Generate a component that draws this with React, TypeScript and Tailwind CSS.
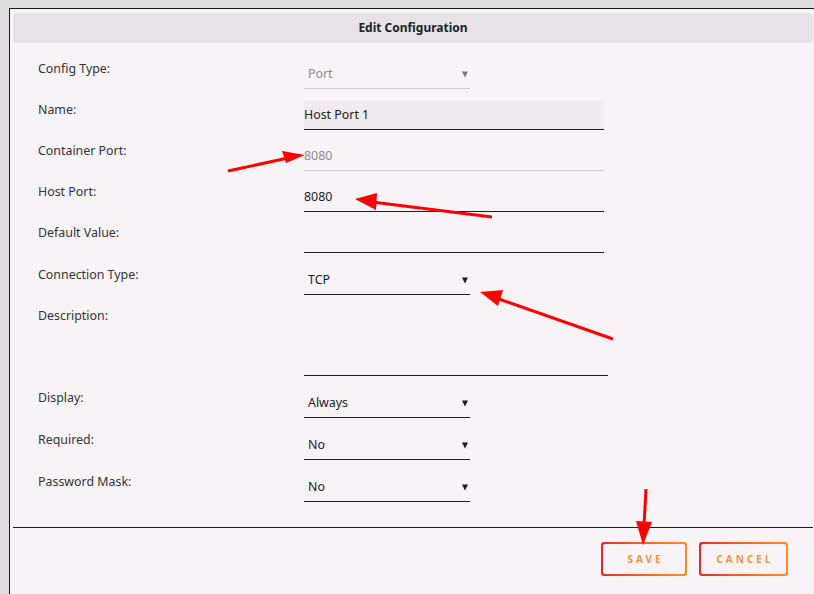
import React from "react";

type Row = {
  label: string;
  kind: "select" | "input" | "filled" | "textarea";
  value?: string;
  disabled?: boolean;
  mt: string;
};

const rows: Row[] = [
  { label: "Config Type:", kind: "select", value: "Port", disabled: true, mt: "mt-[17px]" },
  { label: "Name:", kind: "filled", value: "Host Port 1", mt: "mt-[12px]" },
  { label: "Container Port:", kind: "input", value: "8080", disabled: true, mt: "mt-[12px]" },
  { label: "Host Port:", kind: "input", value: "8080", mt: "mt-[12px]" },
  { label: "Default Value:", kind: "input", value: "", mt: "mt-[12px]" },
  { label: "Connection Type:", kind: "select", value: "TCP", mt: "mt-[13px]" },
  { label: "Description:", kind: "textarea", value: "", mt: "mt-[12px]" },
  { label: "Display:", kind: "select", value: "Always", mt: "mt-[13px]" },
  { label: "Required:", kind: "select", value: "No", mt: "mt-[13px]" },
  { label: "Password Mask:", kind: "select", value: "No", mt: "mt-[13px]" },
];

function Caret({ gray }: { gray?: boolean }) {
  return (
    <svg width="6" height="7" viewBox="0 0 6 7" className="shrink-0">
      <path d="M0 0.5 H6 L3 6.5 Z" fill={gray ? "#7a7a7a" : "#1a1a1a"} />
    </svg>
  );
}

function Field({ row }: { row: Row }) {
  if (row.kind === "select") {
    return (
      <div
        className={`w-[166px] h-[29px] flex items-center justify-between pl-[4px] pr-[2px] border-b ${
          row.disabled ? "border-[#cfcccf] text-[#8c8c8c]" : "border-[#1e1e1e] text-[#222]"
        }`}
      >
        <span>{row.value}</span>
        <Caret gray={row.disabled} />
      </div>
    );
  }
  if (row.kind === "filled") {
    return (
      <div className="w-[300px] h-[29px] flex items-center bg-[#efebef] border-b border-[#1e1e1e] text-[#222]">
        <span>{row.value}</span>
      </div>
    );
  }
  if (row.kind === "textarea") {
    return <div className="w-[304px] h-[69px] border-b border-[#1e1e1e]" />;
  }
  return (
    <div
      className={`w-[300px] h-[29px] flex items-center border-b ${
        row.disabled ? "border-[#cfcccf] text-[#8c8c8c]" : "border-[#1e1e1e] text-[#222]"
      }`}
    >
      <span>{row.value}</span>
    </div>
  );
}

function GradButton({ label, w }: { label: string; w: string }) {
  return (
    <div className={`${w} h-[34px] rounded-[3px] p-[2px] bg-gradient-to-r from-[#e8272b] to-[#fd8c2c]`}>
      <div className="w-full h-full rounded-[2px] bg-[#f7f3f7] flex items-center justify-center">
        <span className="text-[10px] font-bold tracking-[3px] text-[#f5913e] pl-[3px]">{label}</span>
      </div>
    </div>
  );
}

function Arrows() {
  const red = "#ff0000";
  return (
    <svg className="absolute left-0 top-0 pointer-events-none" width="814" height="594" viewBox="0 0 814 594">
      <line x1="228" y1="171" x2="288" y2="158" stroke={red} strokeWidth="3" />
      <polygon points="305,155 282,151 286,163" fill={red} />
      <line x1="492" y1="217" x2="372" y2="202" stroke={red} strokeWidth="3" />
      <polygon points="355,199 377,193 376,210" fill={red} />
      <line x1="613" y1="339" x2="496" y2="298" stroke={red} strokeWidth="3" />
      <polygon points="480,292 503,290 498,306" fill={red} />
      <line x1="646" y1="489" x2="644" y2="526" stroke={red} strokeWidth="3" />
      <polygon points="643,545 636,521 652,522" fill={red} />
    </svg>
  );
}

export default function App() {
  return (
    <div
      className="relative w-[814px] h-[594px] overflow-hidden bg-[#dedede] pl-[9px] pt-[8px] text-[12.4px]"
      style={{ fontFamily: '"Noto Sans", "DejaVu Sans", sans-serif' }}
    >
      <div className="h-full w-[806px] border-l border-t border-[#161616] bg-[#f7f3f7] pt-[4px] pl-[3px] pr-[2px] flex flex-col">
        <div className="h-[30px] rounded-[4px] bg-[#e6e2e6] flex items-center justify-center font-bold text-[#222] text-[12px]">
          Edit Configuration
        </div>
        <div className="flex flex-col pl-[25px]">
          {rows.map((row) => (
            <div key={row.label} className={`flex items-start ${row.mt}`}>
              <div className="w-[266px] pt-[1px] leading-[16px] text-[#333]">{row.label}</div>
              <Field row={row} />
            </div>
          ))}
        </div>
        <div className="mt-[25px] h-px bg-[#1e1e1e]" />
        <div className="mt-[14px] flex justify-end gap-[12px] pr-[25px]">
          <GradButton label="SAVE" w="w-[86px]" />
          <GradButton label="CANCEL" w="w-[89px]" />
        </div>
      </div>
      <Arrows />
    </div>
  );
}
